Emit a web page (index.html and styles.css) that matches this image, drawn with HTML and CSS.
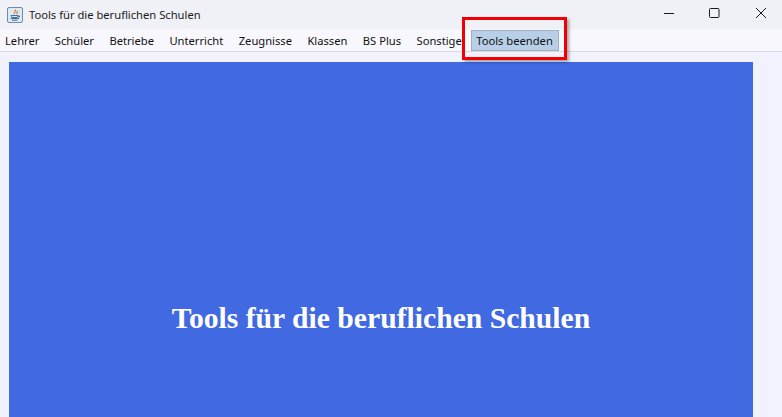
FILE: index.html
```html
<!DOCTYPE html>
<html lang="de">
<head>
  <meta charset="UTF-8" />
  <meta name="viewport" content="width=device-width, initial-scale=1.0"/>
  <title>Tools für die beruflichen Schulen</title>
  <link rel="stylesheet" href="styles.css">
</head>
<body>

  <div class="titlebar">
    <svg class="app-icon" width="16" height="16" viewBox="0 0 16 16">
      <rect x="0.5" y="0.5" width="15" height="15" rx="1.5" fill="#dce8f2" stroke="#6f8ca6"/>
      <path d="M8.5 2.5c1 1.5-2 2.5-1 4.5M10.5 4c.5 1-1.5 2-.5 3" fill="none" stroke="#e2762a" stroke-width="1.2"/>
      <path d="M4 8.5h7l-1 2H5zM11 9h1.5v1H11M3.5 11.5h8.5M5 13.2h5.5" fill="none" stroke="#3f6f9c" stroke-width="1"/>
    </svg>
    <span class="title">Tools für die beruflichen Schulen</span>
    <div class="window-btns">
      <svg width="12" height="12" viewBox="0 0 12 12"><path d="M1 6.5h10" stroke="#1a1a1a" fill="none"/></svg>
      <svg width="12" height="12" viewBox="0 0 12 12"><rect x="0.5" y="1.5" width="9.5" height="9" rx="1" stroke="#1a1a1a" fill="none"/></svg>
      <svg width="12" height="12" viewBox="0 0 12 12"><path d="M1 1l10 10M11 1L1 11" stroke="#1a1a1a" fill="none"/></svg>
    </div>
  </div>

  <div class="menubar">
    <a href="#">Lehrer</a>
    <a href="#">Schüler</a>
    <a href="#">Betriebe</a>
    <a href="#">Unterricht</a>
    <a href="#">Zeugnisse</a>
    <a href="#">Klassen</a>
    <a href="#">BS Plus</a>
    <a href="#">Sonstige</a>
    <a href="#" class="active">Tools beenden</a>
  </div>
  <div class="marker"></div>

  <div class="content">
    <div class="banner">
      <h1>Tools für die beruflichen Schulen</h1>
    </div>
  </div>

</body>
</html>
```

FILE: styles.css
```css
html, body {
  height: 100%;
}
body {
  margin: 0;
  font-family: "Noto Sans", "Open Sans", sans-serif;
  font-size: 11.2px;
  color: #111;
  background: #f2f2fe;
  display: flex;
  flex-direction: column;
  overflow: hidden;
  position: relative;
}

.titlebar {
  height: 29px;
  flex: none;
  display: flex;
  align-items: center;
  padding-left: 7px;
  background: #eff1f6;
}
.app-icon {
  margin-right: 6px;
}
.title {
  color: #1a1a1a;
  padding-bottom: 1px;
}
.window-btns {
  margin-left: auto;
  display: flex;
  gap: 34px;
  padding-right: 15px;
  padding-bottom: 3px;
}

.menubar {
  height: 22px;
  flex: none;
  display: flex;
  align-items: center;
  padding-left: 5px;
  gap: 15.4px;
  background: #f8f7fe;
  border-bottom: 1px solid #d8d8e4;
}
.menubar a {
  color: #111;
  text-decoration: none;
}
.menubar a.active {
  margin-left: -6px;
  padding: 2px 5px 2px 4px;
  background: #b8cfe8;
  border: 1px solid #a3aec4;
}

.marker {
  position: absolute;
  left: 462px;
  top: 17px;
  width: 99px;
  height: 37px;
  border: 3px solid #f00000;
  box-shadow: 2px 2px 3px rgba(0,0,0,0.35);
}

.content {
  flex: 1;
  padding: 10px 29px 0 9px;
  display: flex;
}
.banner {
  flex: 1;
  background: #4169e1;
  display: flex;
  align-items: center;
  justify-content: center;
}
.banner h1 {
  margin: 158px 0 0;
  font-family: "Liberation Serif", serif;
  font-size: 29.65px;
  font-weight: bold;
  color: #fff;
}
```
